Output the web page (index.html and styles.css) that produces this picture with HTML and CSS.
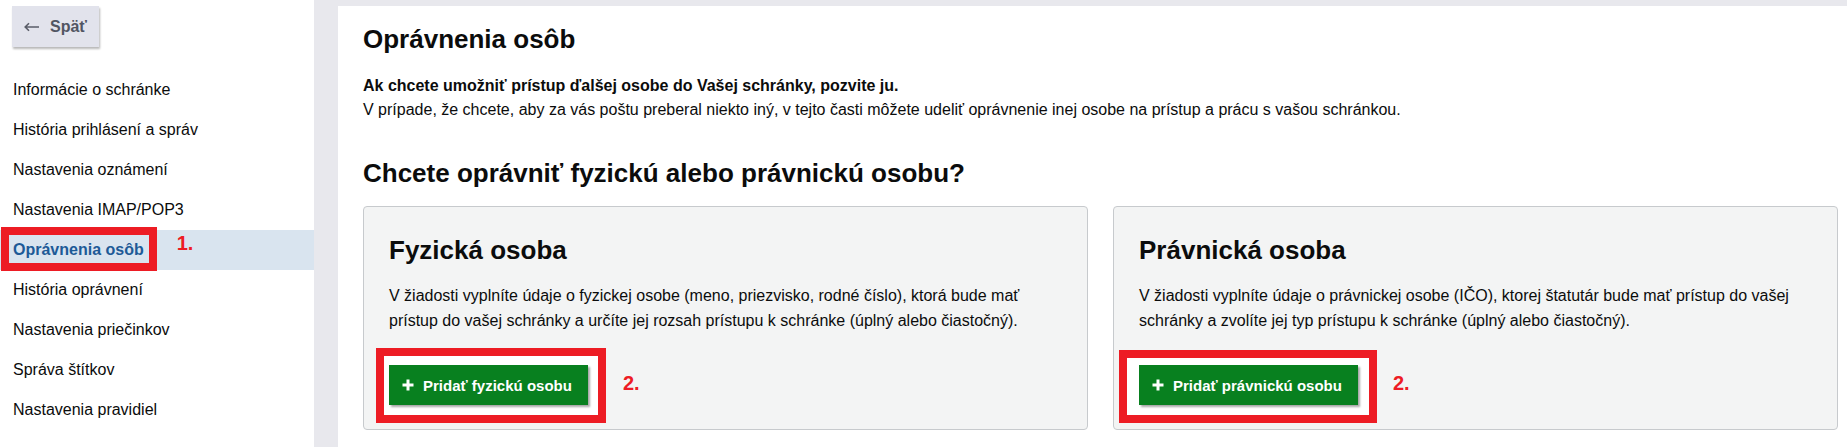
FILE: index.html
```html
<!DOCTYPE html>
<html lang="sk">
<head>
<meta charset="utf-8">
<title>Oprávnenia osôb</title>
<link rel="stylesheet" href="styles.css">
</head>
<body>
<div class="layout">
  <aside class="sidebar">
    <button class="back" type="button">
      <svg class="back-icon" width="16" height="10" viewBox="0 0 16 10" aria-hidden="true"><path d="M1 5h14M5 1.2L1.2 5 5 8.8" fill="none" stroke="#5a5d68" stroke-width="1.6"/></svg>
      <span>Späť</span>
    </button>
    <nav class="nav">
      <a class="nav-item" href="#">Informácie o schránke</a>
      <a class="nav-item" href="#">História prihlásení a správ</a>
      <a class="nav-item" href="#">Nastavenia oznámení</a>
      <a class="nav-item" href="#">Nastavenia IMAP/POP3</a>
      <a class="nav-item active" href="#"><span class="nav-mark">Oprávnenia osôb</span><span class="step step-nav">1.</span></a>
      <a class="nav-item" href="#">História oprávnení</a>
      <a class="nav-item" href="#">Nastavenia priečinkov</a>
      <a class="nav-item" href="#">Správa štítkov</a>
      <a class="nav-item" href="#">Nastavenia pravidiel</a>
    </nav>
  </aside>
  <main class="main">
    <div class="panel">
      <h1 class="title">Oprávnenia osôb</h1>
      <p class="intro"><strong>Ak chcete umožniť prístup ďalšej osobe do Vašej schránky, pozvite ju.</strong><br>V prípade, že chcete, aby za vás poštu preberal niekto iný, v tejto časti môžete udeliť oprávnenie inej osobe na prístup a prácu s vašou schránkou.</p>
      <h2 class="subtitle">Chcete oprávniť fyzickú alebo právnickú osobu?</h2>
      <div class="cards">
        <section class="card">
          <h3 class="card-title">Fyzická osoba</h3>
          <p class="card-text">V žiadosti vyplníte údaje o fyzickej osobe (meno, priezvisko, rodné číslo), ktorá bude mať prístup do vašej schránky a určíte jej rozsah prístupu k schránke (úplný alebo čiastočný).</p>
          <div class="actions">
            <span class="btn-mark mark-a">
              <button class="btn" type="button"><svg class="plus" width="12" height="12" viewBox="0 0 12 12" aria-hidden="true"><path d="M6 0.5v11M0.5 6h11" stroke="#fff" stroke-width="3"/></svg><span>Pridať fyzickú osobu</span></button>
            </span>
            <span class="step">2.</span>
          </div>
        </section>
        <section class="card">
          <h3 class="card-title">Právnická osoba</h3>
          <p class="card-text">V žiadosti vyplníte údaje o právnickej osobe (IČO), ktorej štatutár bude mať prístup do vašej schránky a zvolíte jej typ prístupu k schránke (úplný alebo čiastočný).</p>
          <div class="actions">
            <span class="btn-mark mark-b">
              <button class="btn" type="button"><svg class="plus" width="12" height="12" viewBox="0 0 12 12" aria-hidden="true"><path d="M6 0.5v11M0.5 6h11" stroke="#fff" stroke-width="3"/></svg><span>Pridať právnickú osobu</span></button>
            </span>
            <span class="step">2.</span>
          </div>
        </section>
      </div>
    </div>
  </main>
</div>
</body>
</html>
```
FILE: styles.css
```css
* { box-sizing: border-box; }

html, body {
  margin: 0;
  height: 100%;
}

body {
  font-family: "Liberation Sans", Arial, sans-serif;
  color: #0b0c0c;
  background: #e8e8ed;
}

.layout {
  display: flex;
  min-height: 447px;
}

/* Sidebar */
.sidebar {
  flex: none;
  width: 314px;
  background: #fff;
}

.back {
  display: flex;
  align-items: center;
  gap: 10px;
  margin: 6px 0 0 12px;
  width: 87px;
  height: 41px;
  padding: 0 0 0 12px;
  border: none;
  background: #e2e3ec;
  box-shadow: 1px 2px 2px rgba(0, 0, 0, 0.28);
  font-family: inherit;
  font-size: 16px;
  font-weight: 700;
  color: #515563;
}

.back-icon { flex: none; }

.nav {
  display: flex;
  flex-direction: column;
  margin-top: 23px;
}

.nav-item {
  display: flex;
  align-items: center;
  height: 40px;
  padding-left: 13px;
  font-size: 16px;
  color: #0b0c0c;
  text-decoration: none;
}

.nav-item.active {
  background: #d9e4ef;
  font-weight: 700;
  color: #1d5a97;
}

.nav-mark {
  position: relative;
}

.nav-mark::after {
  content: "";
  position: absolute;
  left: -12px;
  right: -13px;
  top: -14px;
  bottom: -12px;
  border: 8px solid #ed1c24;
}

.step {
  font-size: 20px;
  font-weight: 700;
  color: #ed1c24;
}

.step-nav {
  align-self: flex-start;
  margin: 2px 0 0 33px;
}

/* Main */
.main {
  flex: 1;
  padding: 6px 0 0 24px;
  background: #e8e8ed;
}

.panel {
  min-height: 441px;
  background: #fff;
  padding: 18px 9px 0 25px;
}

.title {
  margin: 0;
  font-size: 26px;
  line-height: 30px;
  font-weight: 700;
}

.intro {
  margin: 20px 0 0;
  font-size: 16px;
  line-height: 24px;
}

.subtitle {
  margin: 36px 0 0;
  font-size: 26px;
  line-height: 30px;
  font-weight: 700;
}

.cards {
  display: grid;
  grid-template-columns: 1fr 1fr;
  gap: 25px;
  margin-top: 18px;
}

.card {
  background: #f3f4f4;
  border: 1px solid #c7cacd;
  border-radius: 4px;
  padding: 28px 25px 24px;
}

.card-title {
  margin: 0;
  font-size: 26px;
  line-height: 30px;
  font-weight: 700;
}

.card-text {
  margin: 18px 0 0;
  font-size: 16px;
  line-height: 25px;
}

.actions {
  display: flex;
  align-items: center;
  margin-top: 32px;
}

.actions .step {
  margin-left: 35px;
  margin-top: -4px;
}

.btn-mark {
  position: relative;
  z-index: 0;
  display: inline-flex;
}

.btn-mark::before {
  content: "";
  position: absolute;
  z-index: -1;
  border: 8px solid #ed1c24;
  background: #fff;
}

.mark-a::before {
  left: -13px;
  right: -18px;
  top: -17px;
  bottom: -18px;
}

.mark-b::before {
  left: -20px;
  right: -19px;
  top: -15px;
  bottom: -18px;
}

.btn {
  display: flex;
  align-items: center;
  gap: 9px;
  height: 40px;
  padding: 0 16px 0 13px;
  border: none;
  background: #08801f;
  color: #fff;
  font-family: inherit;
  font-size: 15px;
  font-weight: 700;
  box-shadow: 2px 2px 2px rgba(0, 0, 0, 0.35);
}

.plus { flex: none; }
```
